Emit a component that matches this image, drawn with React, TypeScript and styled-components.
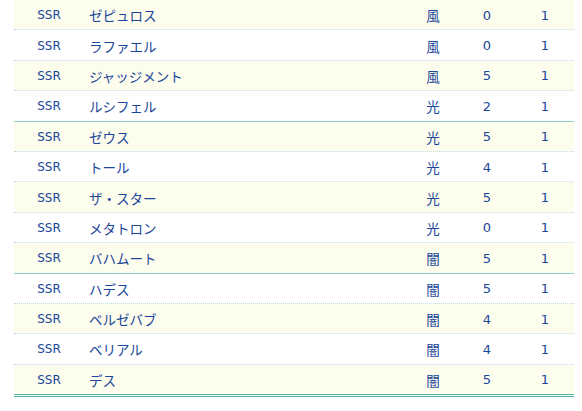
import React from "react";
import styled, { createGlobalStyle } from "styled-components";

const GlobalStyle = createGlobalStyle`
  html, body {
    margin: 0;
    padding: 0;
    background: #fff;
  }
  body {
    font-family: "DejaVu Sans", "Noto Sans CJK JP", sans-serif;
  }
`;

const textBlue = "#1a4699";
const rowYellow = "#fdfdee";
const dotted = "#bcd9e7";
const teal = "#8dd0cb";
const tealDark = "#4db7ae";

interface Chara {
  name: string;
  element: string;
  level: number;
}

const charas: Chara[] = [
  { name: "ゼピュロス", element: "風", level: 0 },
  { name: "ラファエル", element: "風", level: 0 },
  { name: "ジャッジメント", element: "風", level: 5 },
  { name: "ルシフェル", element: "光", level: 2 },
  { name: "ゼウス", element: "光", level: 5 },
  { name: "トール", element: "光", level: 4 },
  { name: "ザ・スター", element: "光", level: 5 },
  { name: "メタトロン", element: "光", level: 0 },
  { name: "バハムート", element: "闇", level: 5 },
  { name: "ハデス", element: "闇", level: 5 },
  { name: "ベルゼバブ", element: "闇", level: 4 },
  { name: "ベリアル", element: "闇", level: 4 },
  { name: "デス", element: "闇", level: 5 },
];

const groupEnds = [3, 8];

const Table = styled.div`
  margin-left: 14px;
  width: 560px;
  color: ${textBlue};
  font-size: 12.5px;
`;

const Row = styled.div<{ $odd: boolean; $border: "dotted" | "solid" | "double" }>`
  display: grid;
  grid-template-columns: 70px 324px 50px 58px 58px;
  align-items: center;
  box-sizing: border-box;
  height: ${({ $border }) => ($border === "double" ? "32.4px" : "30.4px")};
  background: ${({ $odd }) => ($odd ? rowYellow : "#fff")};
  border-bottom: ${({ $border }) =>
    $border === "double"
      ? `3px double ${tealDark}`
      : $border === "solid"
      ? `1px solid ${teal}`
      : `1px dotted ${dotted}`};
`;

const Cell = styled.div<{ $align?: "left" | "center" }>`
  text-align: ${({ $align }) => $align ?? "center"};
  white-space: nowrap;
  padding-top: 1px;
`;

const Rarity = styled(Cell)`
  font-size: 12px;
`;

const Name = styled(Cell)`
  padding-left: 5px;
  font-size: 13.5px;
  font-family: "Noto Sans CJK JP", sans-serif;
`;

const Element = styled(Cell)`
  font-size: 13.5px;
  font-family: "Noto Sans CJK JP", sans-serif;
`;

const Num = styled(Cell)`
  font-size: 13px;
`;

const App = () => (
  <>
    <GlobalStyle />
    <Table>
      {charas.map((c, i) => (
        <Row
          key={c.name}
          $odd={i % 2 === 0}
          $border={
            i === charas.length - 1
              ? "double"
              : groupEnds.includes(i)
              ? "solid"
              : "dotted"
          }
        >
          <Rarity>SSR</Rarity>
          <Name $align="left">{c.name}</Name>
          <Element>{c.element}</Element>
          <Num>{c.level}</Num>
          <Num>1</Num>
        </Row>
      ))}
    </Table>
  </>
);

export default App;
